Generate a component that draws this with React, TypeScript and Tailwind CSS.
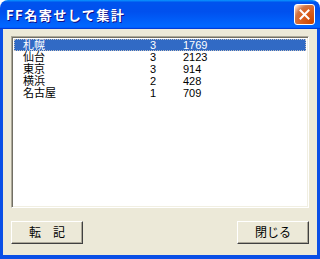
import React from "react";

const rows = [
  { name: "札幌", count: "3", total: "1769" },
  { name: "仙台", count: "3", total: "2123" },
  { name: "東京", count: "3", total: "914" },
  { name: "横浜", count: "2", total: "428" },
  { name: "名古屋", count: "1", total: "709" },
];

const uiFont = {
  fontFamily: '"MS UI Gothic", "Liberation Sans", "Noto Sans CJK JP", sans-serif',
};

function CloseButton() {
  return (
    <button
      type="button"
      aria-label="閉じる"
      className="flex h-[21px] w-[21px] items-center justify-center rounded-[3px] border border-white bg-[radial-gradient(circle_at_90%_90%,#cc4600_0%,#dc6527_55%,#cd7546_70%,#ffccb2_90%,white_100%)]"
    >
      <svg width="11" height="11" viewBox="0 0 11 11">
        <path d="M1.5 1.5 L9.5 9.5 M9.5 1.5 L1.5 9.5" stroke="white" strokeWidth="2" strokeLinecap="square" />
      </svg>
    </button>
  );
}

function DialogButton({ label }: { label: string }) {
  return (
    <button
      type="button"
      className="flex h-[23px] w-[72px] items-center justify-center border border-t-white border-l-white border-b-[#404040] border-r-[#404040] bg-[#ece9d8] text-[12px] leading-[14px] text-black shadow-[inset_-1px_-1px_0_#aca899]"
      style={uiFont}
    >
      {label}
    </button>
  );
}

export default function App() {
  return (
    <div className="h-[259px] w-[320px] bg-white">
      <div className="flex h-full w-full flex-col overflow-hidden rounded-t-[8px]">
        <div className="flex h-[29px] items-center justify-between bg-[linear-gradient(to_bottom,#0997ff,#0053ee_8%,#0050ee_40%,#06f_88%,#06f_93%,#005bff_95%,#003dd7_96%,#003dd7)] pl-[6px] pr-[5px]">
          <span
            className="text-[13px] leading-[16px] font-bold tracking-[1.5px] text-white [text-shadow:1px_1px_#0f1089]"
            style={{ fontFamily: '"Noto Sans CJK JP", sans-serif' }}
          >
            FF名寄せして集計
          </span>
          <CloseButton />
        </div>

        <div className="flex flex-1 flex-col border-x-[3px] border-b-[4px] border-[#0a4fe6] bg-[#ece9d8] px-[8px] pt-[7px] pb-[11px]">
          <div className="h-[172px] border border-t-[#aca899] border-l-[#aca899] border-b-white border-r-white bg-white p-[2px] shadow-[inset_1px_1px_0_#716f64,inset_-1px_-1px_0_#f1efe2]">
            <ul className="text-[11px] leading-[12px] text-black" style={uiFont}>
              {rows.map((row, i) => (
                <li
                  key={row.name}
                  className={
                    i === 0
                      ? "flex h-[12px] items-center overflow-hidden bg-[#316ac5] text-white outline-1 outline-dotted outline-offset-[-1px] outline-[#c0c0c0]"
                      : "flex h-[12px] items-center overflow-hidden"
                  }
                >
                  <span className="w-[136px] pl-[9px]">{row.name}</span>
                  <span className="w-[33px]">{row.count}</span>
                  <span>{row.total}</span>
                </li>
              ))}
            </ul>
          </div>

          <div className="mt-[13px] flex justify-between">
            <DialogButton label="転　記" />
            <DialogButton label="閉じる" />
          </div>
        </div>
      </div>
    </div>
  );
}
